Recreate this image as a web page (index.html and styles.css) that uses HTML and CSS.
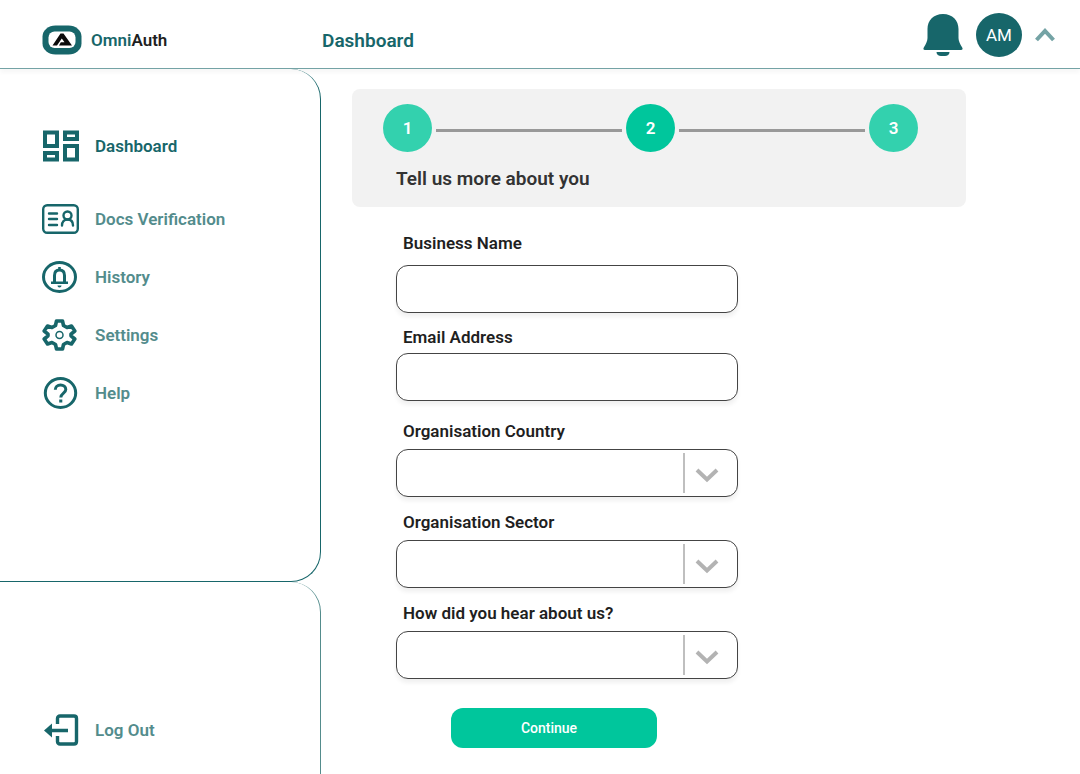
FILE: index.html
```html
<!DOCTYPE html>
<html lang="en">
<head>
    <meta charset="UTF-8">
    <meta name="viewport" content="width=device-width, initial-scale=1.0">
    <title>OmniAuth</title>
    <link rel="stylesheet" href="styles.css">
</head>
<body>
    <header class="header">
        <a href="#" class="logo">
            <svg width="40" height="30" viewBox="0 0 40 30">
                <rect x="0.5" y="0.5" width="39" height="29" rx="13" ry="11" fill="#17666a"/>
                <rect x="6.500" y="6.500" width="27" height="16.500" rx="6" fill="#fff"/>
                <path d="M18.500 8.500h3L30 20.500H17l1.800-3.200h3.700l-2.700-3.800L15 20.500h-4.500z" fill="#0b0b0b"/>
            </svg>
            <span><span class="logo-omni">Omni</span>Auth</span>
        </a>
        <h1>Dashboard</h1>
        <div class="user">
            <button type="button" class="icon-btn" aria-label="Notifications">
                <svg width="40" height="44" viewBox="0 0 40 44">
                    <path d="M20 1C10.500 1 4.500 7.500 4.500 16v9c0 3-1.500 6-3.700 9.500-.8 1.400-.4 2.500 1.200 2.500h36c1.600 0 2-1.100 1.200-2.500C37 31 35.500 28 35.500 25v-9C35.500 7.500 29.500 1 20 1z" fill="#17666a"/>
                    <path d="M13.500 39h13c0 2.500-2 4-4.500 4h-4c-2.500 0-4.500-1.500-4.500-4z" fill="#17666a"/>
                </svg>
            </button>
            <span class="avatar">AM</span>
            <button type="button" class="icon-btn" aria-label="Account menu">
                <svg width="20" height="14" viewBox="0 0 20 14">
                    <path d="M1.500 12L10 3l8.500 9" fill="none" stroke="#74a3a5" stroke-width="4"/>
                </svg>
            </button>
        </div>
    </header>
    <div class="page">
        <aside class="sidebar">
            <nav class="menu">
                <a href="#" class="active">
                    <svg width="37" height="32" viewBox="0 0 37 32">
                        <g fill="none" stroke="#17666a" stroke-width="4">
                            <path d="M3 2.500h12v13.500H3zM23 2.500h12v6.500H23zM3 23h12v6.500H3zM23 16h12v13.500H23z"/>
                        </g>
                    </svg>
                    Dashboard
                </a>
                <a href="#">
                    <svg width="37" height="30" viewBox="0 0 37 30">
                        <g fill="none" stroke="#17666a" stroke-width="2.400" stroke-linecap="round">
                            <rect x="1.200" y="1.200" width="34.600" height="27.600" rx="4"/>
                            <path d="M7 9.500h8M7 15h8M7 21h8M20 21.500c0-4 2.200-6 5.500-6s5.500 2 5.500 6"/>
                            <circle cx="25.500" cy="11.500" r="4"/>
                        </g>
                    </svg>
                    Docs Verification
                </a>
                <a href="#">
                    <svg width="37" height="32" viewBox="0 0 37 32">
                        <ellipse cx="17.500" cy="16" rx="16" ry="14.500" fill="none" stroke="#17666a" stroke-width="3"/>
                        <path d="M12.500 21v-6.500c0-3.500 2-5.500 5-5.500s5 2 5 5.500V21" fill="none" stroke="#17666a" stroke-width="3"/>
                        <path d="M9 20.500h17v2.500H9zM16.200 6h2.600v3h-2.600zM15.500 24.500h4c0 1.300-.8 2-2 2s-2-.7-2-2z" fill="#17666a"/>
                    </svg>
                    History
                </a>
                <a href="#">
                    <svg width="37" height="32" viewBox="0 0 37 32">
                        <path d="M14.500 2h6l1 4.500 3.500 2 4.500-1.500 3.300 5-3.800 3.200v1.600l3.800 3.200-3.300 5-4.500-1.500-3.500 2-1 4.500h-6l-1-4.500-3.500-2-4.500 1.500-3.300-5 3.800-3.200v-1.600l-3.800-3.200 3.300-5 4.500 1.500 3.500-2z" fill="none" stroke="#17666a" stroke-width="3.600" stroke-linejoin="round"/>
                        <circle cx="17.500" cy="16" r="3.500" fill="none" stroke="#17666a" stroke-width="1.500"/>
                    </svg>
                    Settings
                </a>
                <a href="#">
                    <svg width="37" height="32" viewBox="0 0 37 32">
                        <ellipse cx="18.500" cy="16" rx="15.200" ry="14.500" fill="none" stroke="#17666a" stroke-width="3"/>
                        <path d="M13.300 12.800c0-3 2.200-4.800 5.200-4.800s5.300 1.800 5.300 4.500c0 3.500-5 3.700-5 8" fill="none" stroke="#17666a" stroke-width="3"/>
                        <path d="M17.200 22.500h3.100v3h-3.100z" fill="#17666a"/>
                    </svg>
                    Help
                </a>
            </nav>
            <div class="logout">
                <a href="#">
                    <svg width="37" height="32" viewBox="0 0 37 32">
                        <path d="M15.500 10V4.500c0-1.500 1-2.500 2.500-2.500h14c1.500 0 2.500 1 2.500 2.500v23c0 1.500-1 2.500-2.500 2.500H18c-1.500 0-2.500-1-2.500-2.500V22M8 16.500h18" fill="none" stroke="#17666a" stroke-width="3.400"/>
                        <path d="M2 16.500l8-7v14z" fill="#17666a"/>
                    </svg>
                    Log Out
                </a>
            </div>
        </aside>
        <main class="content">
            <section class="steps">
                <div class="steps-row">
                    <span class="step">1</span>
                    <span class="line"></span>
                    <span class="step current">2</span>
                    <span class="line"></span>
                    <span class="step">3</span>
                </div>
                <h2>Tell us more about you</h2>
            </section>
            <form class="form">
                <div class="field loose">
                    <label for="business">Business Name</label>
                    <input type="text" id="business" name="business">
                </div>
                <div class="field tight">
                    <label for="email">Email Address</label>
                    <input type="email" id="email" name="email">
                </div>
                <div class="field">
                    <label for="country">Organisation Country</label>
                    <div class="select-box">
                        <select id="country" name="country"><option value=""></option></select>
                        <span class="arrow">
                            <svg width="24" height="16" viewBox="0 0 24 16">
                                <path d="M2 3l10 9.500L22 3" fill="none" stroke="#b3b3b3" stroke-width="4"/>
                            </svg>
                        </span>
                    </div>
                </div>
                <div class="field">
                    <label for="sector">Organisation Sector</label>
                    <div class="select-box">
                        <select id="sector" name="sector"><option value=""></option></select>
                        <span class="arrow">
                            <svg width="24" height="16" viewBox="0 0 24 16">
                                <path d="M2 3l10 9.500L22 3" fill="none" stroke="#b3b3b3" stroke-width="4"/>
                            </svg>
                        </span>
                    </div>
                </div>
                <div class="field">
                    <label for="source">How did you hear about us?</label>
                    <div class="select-box">
                        <select id="source" name="source"><option value=""></option></select>
                        <span class="arrow">
                            <svg width="24" height="16" viewBox="0 0 24 16">
                                <path d="M2 3l10 9.500L22 3" fill="none" stroke="#b3b3b3" stroke-width="4"/>
                            </svg>
                        </span>
                    </div>
                </div>
                <button type="button" class="continue-btn">Continue</button>
            </form>
        </main>
    </div>
</body>
</html>
```

FILE: styles.css
```css
* {
    box-sizing: border-box;
}
body {
    margin: 0;
    min-height: 100vh;
    display: flex;
    flex-direction: column;
    background-color: #fff;
    color: #1f1f1f;
    font-family: Roboto, "Liberation Sans", sans-serif;
}
a {
    text-decoration: none;
}
svg {
    display: block;
    flex-shrink: 0;
}

/* top bar */
.header {
    display: flex;
    align-items: center;
    height: 69px;
    padding: 0 25px 0 42px;
    border-bottom: 1px solid #74a3a5;
    box-shadow: 0 4px 4px rgba(0, 0, 0, 0.03);
}
.logo {
    display: flex;
    align-items: center;
    gap: 9px;
    width: 280px;
    padding-top: 12px;
    color: #1f1f1f;
    font-size: 17px;
    font-weight: 600;
}
.logo-omni {
    color: #17666a;
}
.header h1 {
    margin: 0;
    padding-top: 12px;
    color: #17666a;
    font-size: 19px;
    font-weight: 600;
}
.user {
    display: flex;
    align-items: center;
    gap: 13px;
    margin-left: auto;
    padding-top: 2px;
}
.icon-btn {
    padding: 0;
    border: none;
    background: none;
    cursor: pointer;
}
.avatar {
    display: flex;
    align-items: center;
    justify-content: center;
    width: 46px;
    height: 44px;
    border-radius: 50%;
    background-color: #17666a;
    color: #fff;
    font-size: 17px;
}

/* sidebar */
.page {
    display: flex;
    flex: 1;
}
.sidebar {
    display: flex;
    flex-direction: column;
    width: 321px;
    flex-shrink: 0;
}
.menu {
    display: flex;
    flex-direction: column;
    flex: 1;
    gap: 22px;
    padding: 59px 42px;
    border-right: 1px solid #17666a;
    border-bottom: 1px solid #17666a;
    border-radius: 0 30px 30px 0;
}
.menu a,
.logout a {
    display: flex;
    align-items: center;
    gap: 16px;
    height: 36px;
    color: #538c8c;
    font-size: 17px;
    font-weight: 600;
}
.menu .active {
    margin-bottom: 15px;
    color: #17666a;
}
.logout {
    padding: 130px 42px 26px;
    border-right: 1px solid #538c8c;
    border-radius: 0 30px 0 0;
}

/* main part */
.content {
    flex: 1;
    padding: 20px 31px;
}
.steps {
    max-width: 614px;
    padding: 15px 48px 16px 31px;
    border-radius: 8px;
    background-color: #f2f2f2;
}
.steps-row {
    display: flex;
    align-items: center;
    gap: 4px;
}
.step {
    display: flex;
    align-items: center;
    justify-content: center;
    width: 49px;
    height: 48px;
    border-radius: 50%;
    background-color: #33d1ae;
    color: #fff;
    font-size: 17px;
    font-weight: 600;
}
.current {
    background-color: #00c69c;
}
.line {
    flex: 1;
    height: 3px;
    margin-top: 4px;
    background-color: #999;
}
.steps h2 {
    margin: 15px 0 0 13px;
    color: #333;
    font-size: 19px;
    font-weight: 600;
    line-height: 24px;
}
.form {
    max-width: 342px;
    margin: 26px 0 0 44px;
}
.field {
    display: flex;
    flex-direction: column;
    gap: 8px;
    margin-bottom: 15px;
}
.loose {
    gap: 12px;
    margin-bottom: 14px;
}
.tight {
    gap: 6px;
    margin-bottom: 20px;
}
.field label {
    padding-left: 7px;
    font-size: 17px;
    font-weight: 600;
    line-height: 20px;
}
.field input,
.field select {
    display: block;
    width: 100%;
    height: 48px;
    padding: 0 16px;
    border: 1px solid #444;
    border-radius: 12px;
    background-color: #fff;
    box-shadow: 0 4px 4px rgba(0, 0, 0, 0.06);
    font-family: inherit;
    font-size: 17px;
    appearance: none;
}
.select-box {
    position: relative;
}
.arrow {
    position: absolute;
    top: 4px;
    right: 0;
    display: flex;
    align-items: center;
    width: 55px;
    height: 40px;
    padding: 4px 0 0 10px;
    border-left: 2px solid #bfbfbf;
    pointer-events: none;
}
.continue-btn {
    display: block;
    width: 206px;
    height: 40px;
    margin: 29px 0 0 55px;
    padding: 0 10px 0 0;
    border: none;
    border-radius: 12px;
    background-color: #00c69c;
    color: #fff;
    font-family: inherit;
    font-size: 14px;
    font-weight: 500;
    cursor: pointer;
}
@media only screen and (max-width: 700px) {
    .page {
        flex-direction: column;
    }
    .sidebar {
        width: 100%;
    }
    .logo {
        width: auto;
        margin-right: 20px;
    }
}
```
